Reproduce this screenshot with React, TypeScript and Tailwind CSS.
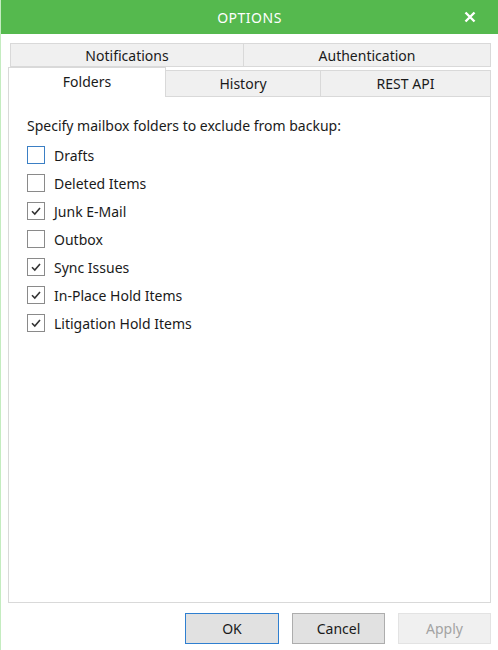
import React from 'react';

const folders = [
  { label: 'Drafts', checked: false, focused: true },
  { label: 'Deleted Items', checked: false },
  { label: 'Junk E-Mail', checked: true },
  { label: 'Outbox', checked: false },
  { label: 'Sync Issues', checked: true },
  { label: 'In-Place Hold Items', checked: true },
  { label: 'Litigation Hold Items', checked: true },
];

const CheckBox: React.FC<{ checked: boolean; focused?: boolean }> = ({ checked, focused }) => (
  <span
    className={`flex h-[18px] w-[18px] shrink-0 items-center justify-center border bg-white ${
      focused ? 'border-[#3b7fc4]' : 'border-[#8a8a8a]'
    }`}
  >
    {checked && (
      <svg width="12" height="12" viewBox="0 0 12 12">
        <polyline points="2,6.2 4.8,9 10,3" fill="none" stroke="#333" strokeWidth="1.6" />
      </svg>
    )}
  </span>
);

export default function App() {
  return (
    <div
      className="flex h-[650px] w-[498px] flex-col border-l border-[#c4ecc0] bg-white text-[#1a1a1a]"
      style={{ fontFamily: '"Noto Sans", "Open Sans", sans-serif' }}
    >
      {/* title bar */}
      <div className="relative flex h-[34px] shrink-0 items-center justify-center bg-[#55b94e] text-white">
        <span className="text-[14px] tracking-[0.5px]">OPTIONS</span>
        <svg className="absolute right-[22px] top-[11px]" width="12" height="12" viewBox="0 0 12 12">
          <path d="M1.5 1.5 L10.5 10.5 M10.5 1.5 L1.5 10.5" stroke="#fff" strokeWidth="2.4" />
        </svg>
      </div>

      <div className="flex flex-1 flex-col px-[7px]">
        {/* tab rows */}
        <div className="ml-[2px] mt-[9px] flex h-[24px] text-[14px]">
          <div className="flex flex-1 items-center justify-center border border-[#d9d9d9] bg-[#f0f0f0]">Notifications</div>
          <div className="flex w-[247px] items-center justify-center border border-l-0 border-[#d9d9d9] bg-[#f0f0f0]">Authentication</div>
        </div>
        <div className="flex h-[29px] text-[14px]">
          <div className="relative z-10 -mb-px flex h-[30px] w-[158px] items-center justify-center border border-b-0 border-[#d9d9d9] bg-white pb-[2px]">Folders</div>
          <div className="mt-[3px] flex h-[26px] w-[155px] items-center justify-center border-r border-t border-[#d9d9d9] bg-[#f0f0f0]">History</div>
          <div className="mt-[3px] flex h-[26px] flex-1 items-center justify-center border-r border-t border-[#d9d9d9] bg-[#f0f0f0]">REST API</div>
        </div>

        {/* panel */}
        <div className="flex h-[507px] flex-col border border-[#d9d9d9] bg-white pl-[18px] pt-[19px] text-[14px]">
          <div className="mb-[10px] leading-[20px]">Specify mailbox folders to exclude from backup:</div>
          <div className="flex flex-col gap-[10px]">
            {folders.map(f => (
              <label key={f.label} className="flex h-[18px] items-center gap-[9px]">
                <CheckBox checked={f.checked} focused={f.focused} />
                <span>{f.label}</span>
              </label>
            ))}
          </div>
        </div>

        {/* buttons */}
        <div className="mt-[10px] flex justify-end gap-[13px] text-[14px]">
          <button className="h-[31px] w-[94px] border border-[#2f7fd0] bg-[#e1e1e1]">OK</button>
          <button className="h-[31px] w-[93px] border border-[#adadad] bg-[#e1e1e1]">Cancel</button>
          <button className="h-[31px] w-[93px] border border-[#e3e3e3] bg-[#f0f0f0] text-[#a3a3a3]">Apply</button>
        </div>
      </div>
    </div>
  );
}
